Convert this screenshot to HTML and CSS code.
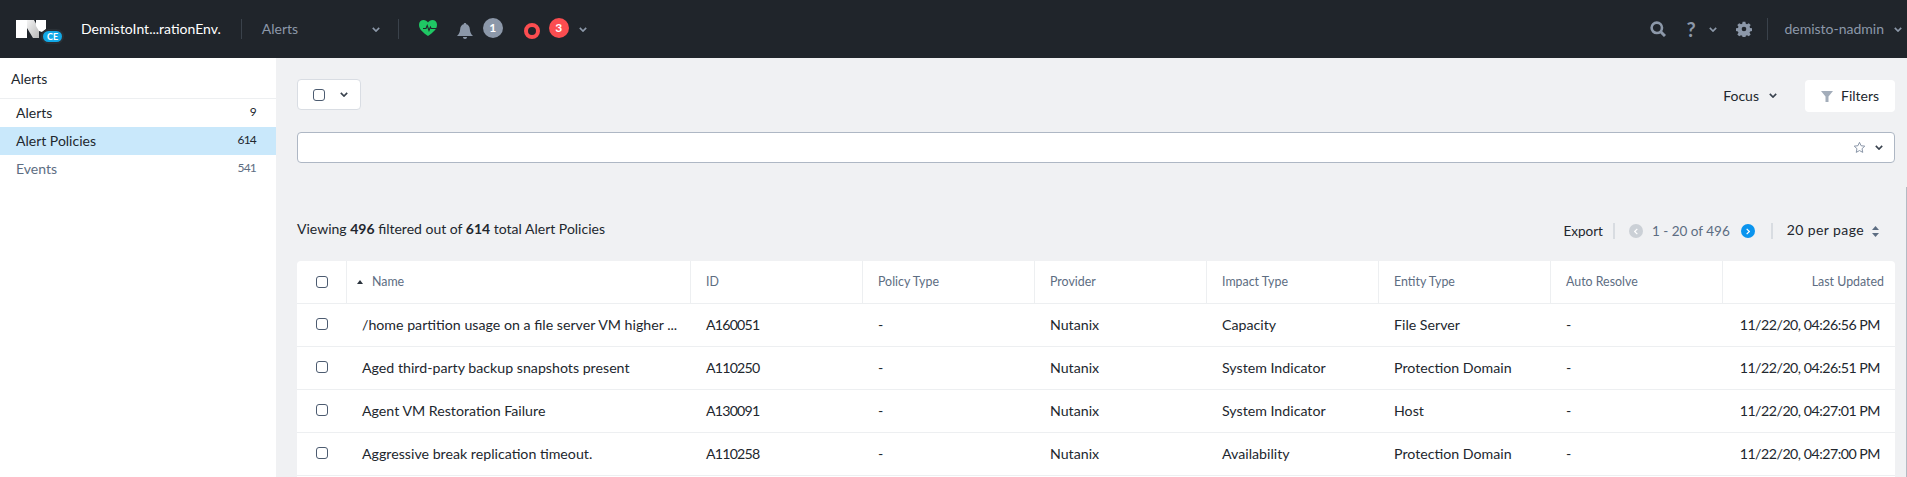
FILE: index.html
```html
<!DOCTYPE HTML>
<html lang="en-US">
<head>
	<meta charset="UTF-8">
	<title>Alert Policies</title>
	<link rel="stylesheet" href="styles.css">
</head>
<body>
	<header class="topbar">
		<div class="logo">
			<svg width="30" height="18" viewBox="0 0 30 18"><defs><linearGradient id="logoFade" x1="0" y1="0" x2="1" y2="1"><stop offset="0" stop-color="#f4f4f4"/><stop offset="1" stop-color="#b8b8b8"/></linearGradient></defs><path fill="#fff" d="M0 0h11v18H0z"/><path fill="url(#logoFade)" d="M11 0h7l5 9v9h-6L11 8z"/><path fill="#fff" d="M20 0h10v9l-4 3-3-1-3-5z"/></svg>
			<span class="logo-ce">CE</span>
		</div>
		<span class="cluster">DemistoInt...rationEnv.</span>
		<span class="bar-sep"></span>
		<span class="module">Alerts</span>
		<svg class="chev chev-grey" viewBox="0 0 10 6"><path d="M1 1l4 4 4-4"/></svg>
		<span class="bar-sep sep-two"></span>
		<svg class="health" width="18" height="16" viewBox="0 0 18 16"><path fill="#1fc764" d="M9 16C4 12.500 0 9.500 0 4.800 0 2 2 0 4.600 0 6.400 0 8 1 9 2.400 10 1 11.600 0 13.400 0 16 0 18 2 18 4.800 18 9.500 14 12.500 9 16z"/><path fill="none" stroke="#20252b" stroke-width="1.100" d="M4 8.500h3l1.200-3 1.800 5 1.400-3.500.8 1.500H18"/></svg>
		<svg class="bell" width="16" height="16" viewBox="0 0 16 16"><path fill="#8c98a9" d="M8 0c.8 0 1.300.5 1.300 1.200 2.200.5 3.300 2.300 3.500 4.800.2 2.800 1 5 3.200 7H0c2.200-2 3-4.200 3.200-7 .2-2.500 1.300-4.300 3.500-4.800C6.700.500 7.200 0 8 0z"/><path fill="#8c98a9" d="M6 14h4c0 1.200-.8 2-2 2s-2-.8-2-2z"/></svg>
		<span class="count count-grey">1</span>
		<span class="ring"></span>
		<span class="count count-red">3</span>
		<svg class="chev chev-grey" viewBox="0 0 10 6"><path d="M1 1l4 4 4-4"/></svg>
		<div class="bar-right">
			<svg width="16" height="16" viewBox="0 0 16 16"><circle cx="6.800" cy="6.800" r="5.200" fill="none" stroke="#8c98a9" stroke-width="2.600"/><path stroke="#8c98a9" stroke-width="3" d="M10.500 10.500l4.500 4.500"/></svg>
			<span class="help">?</span>
			<svg class="chev chev-grey chev-help" viewBox="0 0 10 6"><path d="M1 1l4 4 4-4"/></svg>
			<svg class="gear" width="16" height="16" viewBox="0 0 24 24"><path fill="#8c98a9" fill-rule="evenodd" d="M10 1h4l.7 3.100 1.800.8 2.700-1.700 2.800 2.800-1.700 2.700.8 1.800 3 .5v4l-3 .7-.8 1.800 1.700 2.700-2.800 2.800-2.700-1.700-1.800.8-.7 3h-4l-.7-3-1.800-.8-2.700 1.700-2.800-2.800 1.700-2.700-.8-1.800-3-.7v-4l3-.5.8-1.800-1.700-2.700 2.800-2.800 2.700 1.700 1.800-.8zM12 8.500a3.500 3.500 0 100 7 3.500 3.500 0 000-7z"/></svg>
			<span class="bar-sep sep-user"></span>
			<span class="user">demisto-nadmin</span>
			<svg class="chev chev-grey" viewBox="0 0 10 6"><path d="M1 1l4 4 4-4"/></svg>
		</div>
	</header>

	<div class="layout">
		<nav class="sidebar">
			<div class="side-title">Alerts</div>
			<a class="side-item">Alerts <span>9</span></a>
			<a class="side-item active">Alert Policies <span>614</span></a>
			<a class="side-item muted">Events <span>541</span></a>
		</nav>

		<main class="content">
			<div class="toolbar">
				<div class="select-btn">
					<span class="check"></span>
					<svg class="chev chev-dark" viewBox="0 0 10 6"><path d="M1 1l4 4 4-4"/></svg>
				</div>
				<div class="toolbar-right">
					<span class="focus">Focus</span>
					<svg class="chev chev-dark" viewBox="0 0 10 6"><path d="M1 1l4 4 4-4"/></svg>
					<div class="filters">
						<svg width="12" height="11" viewBox="0 0 12 11"><path fill="#a3adba" d="M0 0h12L7.500 5.500V11h-3V5.500z"/></svg>
						Filters
					</div>
				</div>
			</div>

			<div class="searchbar">
				<svg width="13" height="13" viewBox="0 0 24 24"><path fill="none" stroke="#7f8da0" stroke-width="1.700" d="M12 2.500l2.900 6.200 6.800.8-5 4.700 1.300 6.800-6-3.400-6 3.400 1.300-6.800-5-4.700 6.800-.8z"/></svg>
				<svg class="chev chev-dark" viewBox="0 0 10 6"><path d="M1 1l4 4 4-4"/></svg>
			</div>

			<div class="summary">
				<p>Viewing <b>496</b> filtered out of <b>614</b> total Alert Policies</p>
				<div class="pager">
					<span class="export">Export</span>
					<span class="pager-sep"></span>
					<span class="page-btn page-off"><svg viewBox="0 0 6 10"><path d="M5 1L1 5l4 4"/></svg></span>
					<span class="page-range">1 - 20 of 496</span>
					<span class="page-btn page-on"><svg viewBox="0 0 6 10"><path d="M1 1l4 4-4 4"/></svg></span>
					<span class="pager-sep"></span>
					<span class="per-page">20 per page</span>
					<svg width="7" height="11" viewBox="0 0 7 11"><path fill="#5d6d82" d="M3.500 0L7 4H0zM3.500 11L0 7h7z"/></svg>
				</div>
			</div>

			<div class="table">
				<div class="row head">
					<div class="cell c-check"><span class="check"></span></div>
					<div class="cell c-name"><i class="sort"></i>Name</div>
					<div class="cell">ID</div>
					<div class="cell">Policy Type</div>
					<div class="cell">Provider</div>
					<div class="cell">Impact Type</div>
					<div class="cell">Entity Type</div>
					<div class="cell">Auto Resolve</div>
					<div class="cell c-date">Last Updated</div>
				</div>
				<div class="row">
					<div class="cell c-check"><span class="check"></span></div>
					<div class="cell c-name">/home partition usage on a file server VM higher ...</div>
					<div class="cell c-id">A160051</div>
					<div class="cell">-</div>
					<div class="cell">Nutanix</div>
					<div class="cell">Capacity</div>
					<div class="cell">File Server</div>
					<div class="cell">-</div>
					<div class="cell c-date">11/22/20, 04:26:56 PM</div>
				</div>
				<div class="row">
					<div class="cell c-check"><span class="check"></span></div>
					<div class="cell c-name">Aged third-party backup snapshots present</div>
					<div class="cell c-id">A110250</div>
					<div class="cell">-</div>
					<div class="cell">Nutanix</div>
					<div class="cell">System Indicator</div>
					<div class="cell">Protection Domain</div>
					<div class="cell">-</div>
					<div class="cell c-date">11/22/20, 04:26:51 PM</div>
				</div>
				<div class="row">
					<div class="cell c-check"><span class="check"></span></div>
					<div class="cell c-name">Agent VM Restoration Failure</div>
					<div class="cell c-id">A130091</div>
					<div class="cell">-</div>
					<div class="cell">Nutanix</div>
					<div class="cell">System Indicator</div>
					<div class="cell">Host</div>
					<div class="cell">-</div>
					<div class="cell c-date">11/22/20, 04:27:01 PM</div>
				</div>
				<div class="row">
					<div class="cell c-check"><span class="check"></span></div>
					<div class="cell c-name">Aggressive break replication timeout.</div>
					<div class="cell c-id">A110258</div>
					<div class="cell">-</div>
					<div class="cell">Nutanix</div>
					<div class="cell">Availability</div>
					<div class="cell">Protection Domain</div>
					<div class="cell">-</div>
					<div class="cell c-date">11/22/20, 04:27:00 PM</div>
				</div>
			</div>
		</main>
		<div class="scroll-thumb"></div>
	</div>
</body>
</html>
```

FILE: styles.css
```css
html, body {
	margin: 0;
	padding: 0;
	height: 477px;
	overflow: hidden;
	background: #f0f1f3;
	font: 14px/16px "Lato", "Open Sans", sans-serif;
	color: #22272e;
}

/* top bar */
.topbar {
	display: flex;
	align-items: center;
	height: 58px;
	padding: 0 5px 0 16px;
	box-sizing: border-box;
	background: #20252b;
	color: #8c98a9;
}

.logo {
	display: flex;
	align-self: flex-start;
	margin-top: 20px;
}

.logo-ce {
	width: 19px;
	height: 11px;
	margin: 11px 0 0 -3px;
	border-radius: 6px;
	background: #12a8e6;
	box-shadow: 0 0 0 2px #2a3036;
	color: #fff;
	font-size: 9px;
	font-weight: 700;
	line-height: 11px;
	text-align: center;
}

.cluster {
	margin-left: 19px;
	color: #fff;
}

.bar-sep {
	width: 1px;
	height: 20px;
	margin: 0 20px;
	background: #3a424b;
}

.module {
	width: 110px;
}

.sep-two {
	margin: 0 20px 0 18px;
}

.chev {
	flex: none;
	width: 8px;
	height: 5px;
	fill: none;
	stroke-width: 2;
}

.chev-grey {
	stroke: #8c98a9;
}

.chev-dark {
	stroke: #39424e;
}

.health {
	margin-top: -2px;
}

.bell {
	margin: 4px 0 0 20px;
}

.count {
	width: 20px;
	height: 20px;
	margin-top: -2px;
	border-radius: 50%;
	color: #fff;
	font-size: 12px;
	font-weight: 700;
	line-height: 20px;
	text-align: center;
}

.count-grey {
	margin-left: 10px;
	background: #8c98a9;
}

.ring {
	width: 16px;
	height: 16px;
	margin: 4px 0 0 21px;
	box-sizing: border-box;
	border: 4px solid #fb4d50;
	border-radius: 50%;
}

.count-red {
	margin-left: 9px;
	margin-right: 10px;
	background: #fb4d50;
}

.bar-right {
	display: flex;
	align-items: center;
	margin-left: auto;
}

.help {
	width: 10px;
	margin-left: 20px;
	font: 700 20px/20px "Lato", sans-serif;
}

.chev-help {
	margin: 0 19px 0 13px;
}

.sep-user {
	height: 22px;
	margin: 0 16px 0 15px;
}

.user {
	margin-right: 10px;
}

/* sidebar */
.layout {
	display: flex;
	position: relative;
	height: 419px;
}

.sidebar {
	flex: none;
	width: 276px;
	background: #fff;
}

.side-title {
	height: 41px;
	padding: 13px 0 0 11px;
	box-sizing: border-box;
	border-bottom: 1px solid #edeff1;
}

.side-item {
	display: flex;
	justify-content: space-between;
	height: 28px;
	padding: 0 20px 0 16px;
	line-height: 28px;
}

.side-item span {
	font-size: 12px;
	line-height: 26px;
	letter-spacing: -.8px;
}

.side-item.active {
	background: #c9e8fb;
}

.side-item.muted {
	color: #5d6d82;
}

/* main area */
.content {
	flex: 1;
	min-width: 0;
	padding: 21px 12px 0 21px;
}

.scroll-thumb {
	position: absolute;
	top: 129px;
	right: 0;
	bottom: 0;
	width: 1px;
	background: #b4bac3;
}

.toolbar {
	display: flex;
	justify-content: space-between;
}

.select-btn {
	display: flex;
	align-items: center;
	gap: 15px;
	width: 64px;
	height: 31px;
	padding-left: 15px;
	box-sizing: border-box;
	border: 1px solid #d9dde3;
	border-radius: 4px;
	background: #fff;
}

.check {
	display: block;
	width: 10px;
	height: 10px;
	border: 1px solid #4c5b70;
	border-radius: 3px;
	background: #fff;
}

.toolbar-right {
	display: flex;
	align-items: center;
}

.focus {
	margin-right: 10px;
}

.filters {
	display: flex;
	align-items: center;
	gap: 8px;
	width: 90px;
	height: 32px;
	margin: 1px 0 0 28px;
	padding-left: 16px;
	box-sizing: border-box;
	border-radius: 4px;
	background: #fff;
}

.searchbar {
	display: flex;
	align-items: center;
	justify-content: flex-end;
	gap: 9px;
	height: 31px;
	margin-top: 20px;
	padding-right: 11px;
	box-sizing: border-box;
	border: 1px solid #aeb7c4;
	border-radius: 4px;
	background: #fff;
}

.summary {
	display: flex;
	align-items: flex-start;
	justify-content: space-between;
	height: 30px;
	margin-top: 54px;
}

.summary p {
	margin: 0;
	line-height: 24px;
}

.summary b {
	font-weight: 700;
}

.pager {
	display: flex;
	align-items: center;
	height: 28px;
	padding-right: 16px;
	font-size: 13.500px;
}

.pager-sep {
	width: 2px;
	height: 16px;
	margin: 0 14px 0 16px;
	background: #d8dce1;
}

.export + .pager-sep {
	margin-left: 10px;
}

.page-btn {
	display: flex;
	align-items: center;
	justify-content: center;
	width: 14px;
	height: 14px;
	border-radius: 50%;
}

.page-btn svg {
	width: 4px;
	height: 7px;
	fill: none;
	stroke: #fff;
	stroke-width: 1.800;
}

.page-off {
	background: #cbd0d6;
}

.page-on {
	background: #0a94ee;
}

.page-range {
	margin: 0 11px 0 9px;
	color: #5d6d82;
}

.per-page {
	margin: -3px 8px 0 0;
	font-size: 14px;
	letter-spacing: .4px;
}

/* table */
.table {
	margin-top: 14px;
	padding-bottom: 20px;
	border-radius: 4px 4px 0 0;
	background: #fff;
}

.row {
	display: grid;
	grid-template-columns: 49px 344px repeat(6, 172px) 1fr;
	height: 43px;
	box-sizing: border-box;
	border-bottom: 1px solid #edeff1;
	font-size: 14.200px;
	line-height: 42px;
}

.cell {
	padding-left: 16px;
	white-space: nowrap;
	overflow: hidden;
}

.c-check {
	display: flex;
	align-items: center;
	padding: 0 0 2px 19px;
}

.c-id {
	letter-spacing: -.8px;
}

.c-date {
	padding: 0 15px 0 0;
	letter-spacing: -.5px;
	text-align: right;
}

.head {
	font-size: 12.400px;
	line-height: 42px;
	color: #5d6d82;
}

.head .cell {
	padding-left: 15px;
	border-left: 1px solid #edeff1;
}

.head .c-check {
	padding: 0 0 1px 19px;
	border-left: 0;
}

.head .c-name {
	padding-left: 10px;
}

.head .c-date {
	padding: 0 11px 0 0;
	letter-spacing: 0;
}

.sort {
	display: inline-block;
	margin: 0 9px 2px 0;
	border: 3px solid transparent;
	border-top: 0;
	border-bottom: 4px solid #2b333d;
}
```
